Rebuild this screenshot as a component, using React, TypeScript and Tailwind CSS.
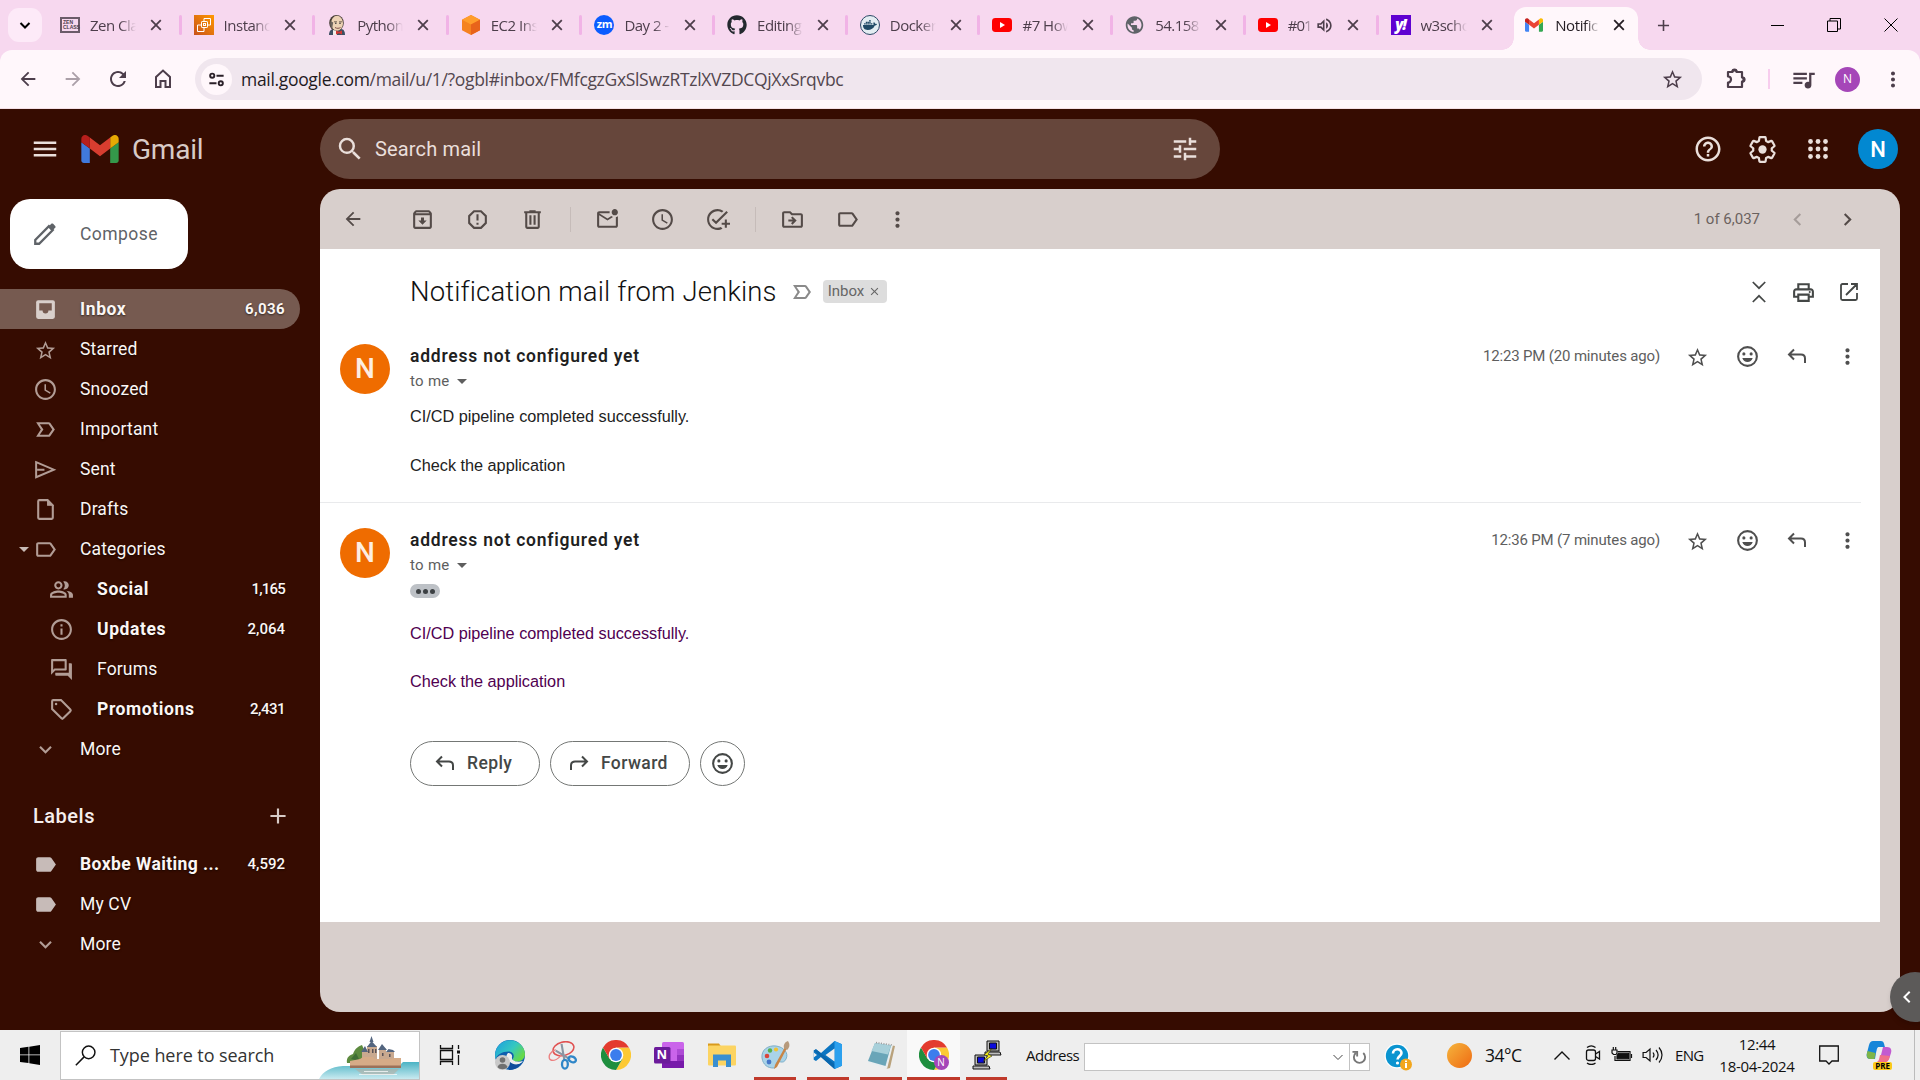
import React from "react";
import {
  MdMenu, MdSearch, MdTune, MdHelpOutline, MdArrowBack, MdArrowForward,
  MdOutlineArchive, MdReportGmailerrorred, MdOutlineMarkEmailUnread, MdSchedule, MdAddTask,
  MdOutlineDriveFileMove, MdOutlineLabel, MdMoreVert, MdChevronLeft, MdChevronRight,
  MdLabelImportantOutline, MdClose, MdOutlinePrint, MdStarBorder,
  MdOutlinePeopleAlt, MdInfoOutline, MdOutlineForum, MdKeyboardArrowDown,
  MdAdd, MdLabel, MdArrowDropDown, MdRefresh, MdQueueMusic, MdOutlineVolumeUp, MdPublic,
} from "react-icons/md";
import { FaGithub, FaDocker } from "react-icons/fa";

/* ---------- brand marks ---------- */

const GmailMark = ({ className }: { className: string }) => (
  <svg viewBox="52 42 88 66" className={className}>
    <path fill="#4285f4" d="M58 108h14V74L52 59v43c0 3.32 2.69 6 6 6" />
    <path fill="#34a853" d="M120 108h14c3.32 0 6-2.69 6-6V59l-20 15" />
    <path fill="#fbbc04" d="M120 48v26l20-15v-8c0-7.42-8.47-11.65-14.4-7.2" />
    <path fill="#ea4335" d="M72 74V48l24 18 24-18v26L96 92" />
    <path fill="#c5221f" d="M52 51v8l20 15V48l-5.6-4.2c-5.94-4.45-14.4-.22-14.4 7.2" />
  </svg>
);

const YouTubeMark = () => (
  <svg viewBox="0 0 20 20" className="size-5">
    <rect y="3" width="20" height="14" rx="3.4" fill="#f00" />
    <path d="M8 7l5 3-5 3z" fill="#fff" />
  </svg>
);

const ZenMark = () => (
  <span className="flex h-4 w-5 flex-col justify-center border-2 border-[#6b5b69] pl-px font-['Liberation_Sans'] text-[5px] leading-[5px] font-bold text-[#4d3e4b]">
    <span>ZEN</span>
    <span>CLASS</span>
  </span>
);

const InstanceMark = () => (
  <svg viewBox="0 0 20 20" className="size-5">
    <defs>
      <linearGradient id="aws" x1="0" y1="1" x2="1" y2="0">
        <stop offset="0" stopColor="#c8511b" />
        <stop offset="1" stopColor="#f90" />
      </linearGradient>
    </defs>
    <rect width="20" height="20" fill="url(#aws)" />
    <g fill="none" stroke="#fff" strokeWidth="1">
      <rect x="7.5" y="6.500" width="6" height="6" rx=".6" />
      <path d="M10 6V3.500h6.500v6.500H14M7 10H3.500v6.500H10V13" />
      <rect x="9.500" y="8.500" width="2" height="2" />
    </g>
  </svg>
);

const JenkinsMark = () => (
  <svg viewBox="0 0 20 20" className="size-5">
    <path d="M2 20c0-4 2-6 5-6h7c3 0 4 3 4 6z" fill="#3c4f63" />
    <ellipse cx="9.500" cy="8" rx="7.300" ry="8" fill="#453c35" />
    <ellipse cx="10" cy="8.300" rx="6" ry="7.500" fill="#ecd2b4" />
    <path d="M3.500 6c-1 3 .4 6.500 1.500 8.500l1.200-7z" fill="#6e645d" />
    <path d="M7 6.800h3M12 6.800h3" stroke="#5a4c40" strokeWidth=".8" />
    <circle cx="8.800" cy="8.300" r=".8" fill="#333" />
    <circle cx="13" cy="8.300" r=".8" fill="#333" />
    <path d="M8 12.500c2 1.200 4 1 5.500 0" stroke="#81504a" fill="none" />
    <path d="M6 15l4 1v4H6z" fill="#f2efe9" />
    <path d="M9 15.500l3 1.300 3-1.300v4l-3-1.300L9 19.500z" fill="#d33833" />
  </svg>
);

const CubeMark = () => (
  <svg viewBox="0 0 20 20" className="size-5">
    <path d="M10 0l9 4.800v10.400L10 20l-9-4.800V4.800z" fill="#f58220" />
    <path d="M10 0l9 4.800-9 4.700-9-4.700z" fill="#ff9d2b" />
    <path d="M10 9.500l9-4.700v10.400L10 20z" fill="#e8641b" />
  </svg>
);

const ZoomMark = () => (
  <span className="flex size-5 items-center justify-center rounded-full bg-[#0b5cff] pb-0.5 font-['Open_Sans'] text-[11px] font-bold tracking-[-0.5px] text-white">zm</span>
);

const DockerMark = () => (
  <span className="flex size-5 items-center justify-center rounded-full border-[1.500px] border-[#2c4a66] bg-[#e3edf2] text-[#1f4a66]">
    <FaDocker className="size-3.5" />
  </span>
);

const YahooMark = () => (
  <span className="flex size-5 items-center justify-center bg-[#5f01d1] pb-0.5 font-['Open_Sans'] text-[15px] font-extrabold tracking-[-1px] text-white italic">y!</span>
);

const ChromeMark = ({ badge }: { badge?: boolean }) => (
  <svg viewBox="0 0 30 30" className="size-[30px]">
    <path d="M15 7.500h13A15 15 0 0 1 15 30l6.500-11.300z" fill="#fcc934" />
    <path d="M2 7.500A15 15 0 0 0 15 30l6.500-11.300L15 15 8.500 18.800z" fill="#1e8e3e" />
    <path d="M2 7.500A15 15 0 0 1 28 7.500H15l-6.500 11.300z" fill="#e33b2e" />
    <circle cx="15" cy="15" r="7.300" fill="#fff" />
    <circle cx="15" cy="15" r="5.900" fill="#3b7ded" />
    {badge && <circle cx="22.500" cy="22.500" r="7.500" fill="#a546b8" />}
  </svg>
);

/* ---------- glyphs missing from the icon set ---------- */

const Cross = () => (
  <svg viewBox="0 0 12 12" className="size-3 shrink-0" fill="none" stroke="currentColor" strokeWidth="1.800">
    <path d="M1.200 1.200l9.600 9.600M10.800 1.200l-9.600 9.600" />
  </svg>
);

const Gear = () => (
  <svg viewBox="0 0 24 24" className="size-[31px]">
    <path
      fill="none"
      stroke="currentColor"
      strokeWidth="1.700"
      strokeLinejoin="round"
      d="M19.140 12.940c.04-.3.06-.61.06-.94 0-.32-.02-.64-.07-.94l2.030-1.580c.18-.14.23-.41.12-.61l-1.920-3.320c-.12-.22-.37-.29-.59-.22l-2.390.96c-.5-.38-1.030-.7-1.620-.94L14.400 2.810c-.04-.24-.24-.41-.48-.41h-3.840c-.24 0-.43.17-.47.41L9.250 5.350C8.660 5.590 8.120 5.920 7.630 6.290L5.240 5.330c-.22-.08-.47 0-.59.22L2.740 8.870C2.620 9.080 2.660 9.340 2.860 9.480l2.030 1.580C4.840 11.360 4.800 11.690 4.800 12s.02.64.07.94l-2.030 1.580c-.18.14-.23.41-.12.61l1.920 3.320c.12.22.37.29.59.22l2.390-.96c.5.38 1.030.7 1.620.94l.36 2.540c.05.24.24.41.48.41h3.840c.24 0 .44-.17.47-.41l.36-2.540c.59-.24 1.130-.56 1.620-.94l2.390.96c.22.08.47 0 .59-.22l1.920-3.320c.12-.22.07-.47-.12-.61z"
    />
    <circle cx="12" cy="12" r="3.200" fill="currentColor" />
  </svg>
);

const AppDots = () => (
  <svg viewBox="0 0 20 20" className="size-5" fill="currentColor">
    {[2.5, 10, 17.5].map((y) => [2.5, 10, 17.5].map((x) => <circle key={`${x}-${y}`} cx={x} cy={y} r="2.400" />))}
  </svg>
);

const InboxIcon = () => (
  <svg viewBox="0 0 24 24" className="size-[25px]">
    <path fill="currentColor" d="M19 3H5a2 2 0 0 0-2 2v14a2 2 0 0 0 2 2h14a2 2 0 0 0 2-2V5a2 2 0 0 0-2-2z" />
    <path d="M6 6h12v7h-3.200a2.800 2.800 0 0 1-5.600 0H6z" fill="#765a50" />
  </svg>
);

const SentIcon = () => (
  <svg viewBox="0 0 24 24" className="size-[25px]" fill="none" stroke="currentColor" strokeWidth="1.900">
    <path d="M3 5l17 7.200L3 19.400zM4 12.200h7" />
  </svg>
);

const Pencil = () => (
  <svg viewBox="0 0 24 24" className="size-[26px]" fill="none" stroke="#5f6368" strokeWidth="2.100">
    <path d="M3 21v-3.600L15.600 4.800l3.600 3.600L6.600 21z" />
    <path d="M14.800 5.600l3.600 3.600 3-3c.5-.5.500-1.200 0-1.700l-1.900-1.900c-.5-.5-1.200-.5-1.700 0z" fill="#5f6368" stroke="none" />
  </svg>
);

const Trash = () => (
  <svg viewBox="0 0 24 24" className="size-[25px]" fill="currentColor">
    <path d="M15 4V3H9v1H4v2h1v13c0 1.100.9 2 2 2h10c1.100 0 2-.9 2-2V6h1V4h-5zm2 15H7V6h10v13zM9 8h2v9H9zm4 0h2v9h-2z" />
  </svg>
);

const ReplyArrow = ({ flip }: { flip?: boolean }) => (
  <svg viewBox="0 0 24 24" className={flip ? "size-6 -scale-x-100" : "size-6"} fill="none" stroke="currentColor" strokeWidth="2">
    <path d="M9 5.500L4 10.500l5 5M4.500 10.500H16c2.500 0 4 1.500 4 4V19" />
  </svg>
);

const Smiley = () => (
  <svg viewBox="0 0 24 24" className="size-[25px]" fill="currentColor">
    <circle cx="12" cy="12" r="9" fill="none" stroke="currentColor" strokeWidth="2" />
    <circle cx="8.500" cy="9.500" r="1.500" />
    <circle cx="15.500" cy="9.500" r="1.500" />
    <path d="M7 13.500h10c-.8 2.300-2.700 3.800-5 3.800s-4.200-1.500-5-3.800z" />
  </svg>
);

const CollapseAll = () => (
  <svg viewBox="0 0 24 24" className="size-6" fill="none" stroke="currentColor" strokeWidth="1.700">
    <path d="M5.800 2l6.200 6.200L18.200 2M5.800 22l6.200-6.200 6.200 6.200" />
  </svg>
);

const PopOut = () => (
  <svg viewBox="0 0 24 24" className="size-6" fill="none" stroke="currentColor" strokeWidth="1.800">
    <path d="M11 4H5.500A1.500 1.500 0 0 0 4 5.500v13A1.500 1.500 0 0 0 5.500 20h13a1.500 1.500 0 0 0 1.500-1.500V13M14 4h6v6M20 4L9 15" />
  </svg>
);

const DraftIcon = () => (
  <svg viewBox="0 0 24 24" className="size-[25px]" fill="none" stroke="currentColor" strokeWidth="2">
    <path d="M14 3H6a1 1 0 0 0-1 1v16a1 1 0 0 0 1 1h12a1 1 0 0 0 1-1V8z" />
    <path d="M14 3v5h5z" fill="currentColor" strokeWidth="1" />
  </svg>
);

const TagIcon = () => (
  <svg viewBox="0 0 24 24" className="size-[25px]" fill="none" stroke="currentColor" strokeWidth="2">
    <path d="M3 4a1 1 0 0 1 1-1h7.500l9 9c.6.600.6 1 0 1.600l-6.900 6.900c-.6.600-1 .6-1.600 0l-9-9z" />
    <circle cx="6.800" cy="6.800" r="1.200" fill="currentColor" stroke="none" />
  </svg>
);

const HomeIcon = () => (
  <svg viewBox="0 0 20 20" className="size-5" fill="none" stroke="currentColor" strokeWidth="2">
    <path d="M3 8l7-6.500L17 8v10h-4.500v-6h-5v6H3z" />
  </svg>
);

const PuzzleIcon = () => (
  <svg viewBox="0 0 24 24" className="size-6" fill="none" stroke="currentColor" strokeWidth="2.200" strokeLinejoin="round">
    <path d="M4 5h4.500a2 2 0 0 1 4 0H18v5.500a2 2 0 0 1 0 4V20H4v-4.500a3 3 0 0 0 0-6z" />
    <path d="M8.500 4.500a2 2 0 0 1 4 0M18.500 10.500a2 2 0 0 1 0 4" fill="currentColor" />
  </svg>
);

const SiteControls = () => (
  <svg viewBox="0 0 20 20" className="size-[19px]" fill="none" stroke="#2b2129" strokeWidth="2">
    <circle cx="5.500" cy="6" r="2.200" />
    <path d="M10 6h7.500M2.500 14H10" />
    <circle cx="14.500" cy="14" r="2.200" />
  </svg>
);

/* ---------- browser chrome ---------- */

const tabs: { icon: React.ReactNode; title: string; sound?: boolean }[] = [
  { icon: <ZenMark />, title: "Zen Cla" },
  { icon: <InstanceMark />, title: "Instanc" },
  { icon: <JenkinsMark />, title: "Python" },
  { icon: <CubeMark />, title: "EC2 Ins" },
  { icon: <ZoomMark />, title: "Day 2 -" },
  { icon: <FaGithub className="size-5 text-[#24292f]" />, title: "Editing" },
  { icon: <DockerMark />, title: "Docker" },
  { icon: <YouTubeMark />, title: "#7 How" },
  { icon: <MdPublic className="-ml-px size-[22px] text-[#5f6368]" />, title: "54.158" },
  { icon: <YouTubeMark />, title: "#01", sound: true },
  { icon: <YahooMark />, title: "w3scho" },
];

const TabStrip = () => (
  <div className="flex h-[50px] items-center bg-[#f7d8ef] text-[#4d3e4b]">
    <div className="ml-2 flex size-[34px] items-center justify-center rounded-[11px] bg-[#fdeaf8] text-black">
      <svg viewBox="0 0 12 12" className="size-3" fill="none" stroke="currentColor" strokeWidth="2"><path d="M1.500 4L6 8.500 10.500 4" /></svg>
    </div>
    <div className="w-1.5" />
    {tabs.map((t, i) => (
      <div key={i} className={"flex h-5 shrink-0 items-center pl-3 " + (i < 4 ? "w-[133.600px]" : "w-[132.700px]")}>
        <span className="flex w-5 shrink-0 items-center">{t.icon}</span>
        <span className={(t.sound ? "w-[30px] tracking-[-1.100px] [mask-image:linear-gradient(to_right,black_16px,transparent_24px)]" : "w-[58px] tracking-[-0.5px] [mask-image:linear-gradient(to_right,black_30px,transparent_46px)]") + " ml-2.5 shrink-0 text-[15px] leading-5 whitespace-nowrap"}>{t.title}</span>
        {t.sound && <span className="flex w-[14px] shrink-0 justify-center"><MdOutlineVolumeUp className="size-[19px] shrink-0" /></span>}
        <span className={"flex shrink-0 justify-center " + (t.sound ? "w-[43px]" : "w-[16px]")}><Cross /></span>
        <span className={i === 10 ? "ml-auto w-[3px]" : "ml-auto h-5 w-[3px] rounded bg-[#f1b3e6]"} />
      </div>
    ))}
    <div className="ml-[3px] flex h-[43px] w-[124px] shrink-0 self-end rounded-t-xl bg-[#fff7fb] text-[#241d23]">
      <div className="relative flex w-full items-center pb-2 pl-[11px]">
        <span className="absolute bottom-0 -left-3 size-3 bg-[radial-gradient(circle_at_0_0,transparent_11.500px,#fff7fb_12px)]" />
        <span className="absolute -right-3 bottom-0 size-3 bg-[radial-gradient(circle_at_100%_0,transparent_11.500px,#fff7fb_12px)]" />
        <GmailMark className="h-[14px] w-[18px]" />
        <span className="ml-3 w-[54px] shrink-0 text-[15px] leading-5 tracking-[-0.4px] whitespace-nowrap [mask-image:linear-gradient(to_right,black_30px,transparent_45px)]">Notific</span>
        <span className="flex w-[20px] justify-center"><Cross /></span>
      </div>
    </div>
    <div className="flex w-[50px] justify-center"><MdAdd className="size-[19px]" /></div>
    <div className="ml-auto flex items-center text-black">
      <span className="flex w-[57px] justify-center"><span className="h-px w-[13px] bg-black" /></span>
      <span className="flex w-[56px] justify-center">
        <svg viewBox="0 0 14 14" className="size-3.5" fill="none" stroke="currentColor"><path d="M.5 3h10v10.500H.5zM3 3V.5h10.500V11H10.500" /></svg>
      </span>
      <span className="mr-px flex w-[57px] justify-center">
        <svg viewBox="0 0 14 14" className="size-3.5" fill="none" stroke="currentColor"><path d="M.5.5l13 13M13.500.5l-13 13" /></svg>
      </span>
    </div>
  </div>
);

const Toolbar = () => (
  <div className="bg-[#f7d8ef]">
    <div className="flex h-[59px] items-center rounded-t-xl border-b border-[#f3dfe6] bg-[#fff7fb] pl-[5px] text-[#4d3e4b]">
      <span className="flex w-[45px] justify-center"><MdArrowBack className="size-[22px]" /></span>
      <span className="flex w-[45px] justify-center text-[#ab9fa8]"><MdArrowForward className="size-[22px]" /></span>
      <span className="flex w-[45px] justify-center"><MdRefresh className="size-6" /></span>
      <span className="flex w-[45px] justify-center pb-px"><HomeIcon /></span>
      <div className="ml-[10px] flex h-[42px] w-[1507px] items-center rounded-full bg-[#f0e6ee] pl-[6px]">
        <span className="flex size-[31px] items-center justify-center rounded-full bg-[#fff7fb]"><SiteControls /></span>
        <span className="ml-[9px] text-[17.500px] tracking-[-0.32px] text-[#53474f]"><span className="text-[#1f1a1e]">mail.google.com</span>/mail/u/1/?ogbl#inbox/FMfcgzGxSlSwzRTzlXVZDCQjXxSrqvbc</span>
        <MdStarBorder className="mr-[18px] ml-auto size-[23px]" />
      </div>
      <span className="ml-[22px] flex w-6"><PuzzleIcon /></span>
      <span className="ml-[20px] h-5 w-0.5 bg-[#f8cdee]" />
      <span className="ml-[19px] flex w-7 justify-center"><MdQueueMusic className="size-[27px]" /></span>
      <span className="ml-[18px] flex size-[25px] items-center justify-center rounded-full bg-[#a546b8] text-xs text-white">N</span>
      <span className="ml-[21px] flex w-6 justify-center"><MdMoreVert className="size-[25px]" /></span>
    </div>
  </div>
);

/* ---------- Gmail ---------- */

const GmailHeader = () => (
  <header className="flex h-20 items-center text-[#eadfdb]">
    <MdMenu className="ml-[30px] size-[30px]" />
    <GmailMark className="ml-[21px] h-[28px] w-[38px] opacity-90" />
    <span className="mt-0.5 ml-[13px] w-[188px] text-[28px] tracking-[-0.2px] text-[#d8cbc7]">Gmail</span>
    <div className="flex h-[60px] w-[900px] items-center rounded-full bg-[#66463b]">
      <MdSearch className="ml-[15px] size-[30px]" />
      <span className="ml-[10px] text-[20px] tracking-[0.15px]">Search mail</span>
      <MdTune className="mr-5 ml-auto size-[30px]" />
    </div>
    <div className="ml-auto flex items-center">
      <span className="flex w-[55px] justify-center"><MdHelpOutline className="size-[30px]" /></span>
      <span className="flex w-[55px] justify-center"><Gear /></span>
      <span className="flex w-[55px] justify-center"><AppDots /></span>
      <span className="mr-[22px] ml-[13px] flex size-10 items-center justify-center rounded-full bg-[#0288d1] text-[22px] font-medium text-white">N</span>
    </div>
  </header>
);

type NavItem = { icon: React.ReactNode; label: string; count?: string; bold?: boolean; sub?: boolean; active?: boolean; caret?: boolean };
const ic = "size-[25px]";
const nav: NavItem[] = [
  { icon: <InboxIcon />, label: "Inbox", count: "6,036", bold: true, active: true },
  { icon: <MdStarBorder className="mt-0.5 size-[23px]" />, label: "Starred" },
  { icon: <MdSchedule className={ic} />, label: "Snoozed" },
  { icon: <MdLabelImportantOutline className={ic} />, label: "Important" },
  { icon: <SentIcon />, label: "Sent" },
  { icon: <DraftIcon />, label: "Drafts" },
  { icon: <MdOutlineLabel className={ic} />, label: "Categories", caret: true },
  { icon: <MdOutlinePeopleAlt className={ic} />, label: "Social", count: "1,165", bold: true, sub: true },
  { icon: <MdInfoOutline className={ic} />, label: "Updates", count: "2,064", bold: true, sub: true },
  { icon: <MdOutlineForum className={ic} />, label: "Forums", sub: true },
  { icon: <TagIcon />, label: "Promotions", count: "2,431", bold: true, sub: true },
  { icon: <MdKeyboardArrowDown className={ic} />, label: "More" },
];
const labels: NavItem[] = [
  { icon: <MdLabel className={ic} />, label: "Boxbe Waiting ...", count: "4,592", bold: true },
  { icon: <MdLabel className={ic} />, label: "My CV" },
  { icon: <MdKeyboardArrowDown className={ic} />, label: "More" },
];

const NavRow = ({ icon, label, count, bold, sub, active, caret }: NavItem) => (
  <div className={"flex h-10 w-[300px] items-center rounded-r-full pr-[15px] text-[17.500px] text-[#fbf6f4] [text-shadow:0_1px_2px_rgba(0,0,0,0.6)] " + (active ? "bg-[#765a50]" : "")}>
    <span className={"flex items-center justify-end " + (sub ? "w-[74px]" : "w-[58px]")}>
      {caret && <MdArrowDropDown className="-mr-[3px] size-[24px] text-[#c9bbb6]" />}
      <span className={"flex w-[25px] justify-center " + (active ? "text-[#d9cfcb]" : label === "My CV" || (bold && !sub) ? "text-[#c7bbb8]" : "text-[#b29d96]")}>{icon}</span>
    </span>
    <span className={(sub ? "ml-[23px] " : "ml-[22px] ") + (bold ? (sub || active ? "font-bold tracking-[0.600px]" : "font-bold tracking-[0.42px]") : "tracking-[0.15px]")}>{label}</span>
    <span className={"ml-auto text-[15px] " + (active ? "font-bold tracking-[0.4px]" : count === "1,165" ? "font-medium tracking-[-0.800px]" : count === "2,431" ? "font-medium tracking-[-0.5px]" : "font-medium")}>{count}</span>
  </div>
);

const Sidebar = () => (
  <aside className="w-80 shrink-0 pt-[10px]">
    <div className="ml-2.5 flex h-[70px] w-[178px] items-center rounded-[20px] bg-white pl-[22px] text-[#5f6368]">
      <Pencil />
      <span className="ml-[22px] text-[17.500px] tracking-[0.45px]">Compose</span>
    </div>
    <nav className="mt-5">{nav.map((n) => <NavRow key={n.label} {...n} />)}</nav>
    <div className="mt-[27px] flex h-10 w-[300px] items-center pr-[9px] pl-[33px] text-[20px] font-medium tracking-[0.5px] text-[#f5efed]">
      Labels
      <MdAdd className="ml-auto size-[26px] text-[#d8cbc7]" />
    </div>
    <nav className="mt-2">{labels.map((n) => <NavRow key={n.label} {...n} />)}</nav>
  </aside>
);

const Cell = ({ children, w = "w-[55px]" }: { children: React.ReactNode; w?: string }) => (
  <span className={"flex shrink-0 justify-center " + w}>{children}</span>
);

const MailToolbar = () => (
  <div className="flex h-[60px] items-center text-[#544b48]">
    <Cell w="w-[66px]"><MdArrowBack className="size-[22px]" /></Cell>
    <span className="w-[9px]" />
    <Cell><MdOutlineArchive className={ic} /></Cell>
    <Cell><MdReportGmailerrorred className={ic} /></Cell>
    <Cell><Trash /></Cell>
    <Cell w="w-5"><span className="h-[25px] w-px bg-[#c6bcb9]" /></Cell>
    <Cell><MdOutlineMarkEmailUnread className={ic} /></Cell>
    <Cell><MdSchedule className={ic} /></Cell>
    <Cell><MdAddTask className={ic} /></Cell>
    <Cell w="w-5"><span className="h-[25px] w-px bg-[#c6bcb9]" /></Cell>
    <Cell><MdOutlineDriveFileMove className={ic} /></Cell>
    <Cell><MdOutlineLabel className={ic} /></Cell>
    <Cell w="w-[45px]"><MdMoreVert className={ic} /></Cell>
    <span className="ml-auto text-[15px] text-[#6b625f]">1 of 6,037</span>
    <span className="ml-[12px] flex w-[50px] justify-center text-[#a69d9a]"><MdChevronLeft className={ic} /></span>
    <span className="mr-[28px] flex w-[50px] justify-center"><MdChevronRight className={ic} /></span>
  </div>
);

const MessageHead = ({ time }: { time: string }) => (
  <div className="flex">
    <span className="mt-px ml-5 flex size-[50px] shrink-0 items-center justify-center rounded-full bg-[#ef6c00] text-[28px] font-medium text-[#fdeee2]">N</span>
    <div className="ml-5 flex flex-1 flex-col">
      <div className="flex h-[26px] items-center">
        <span className="text-[17.500px] font-semibold tracking-[0.77px] text-[#1f1f1f]">address not configured yet</span>
        <span className="ml-auto text-[15px] tracking-[-0.16px] text-[#5e5e5e]">{time}</span>
        <div className="mr-2 ml-3 flex items-center text-[#4f4f4f]">
          <Cell w="w-[50px]"><MdStarBorder className="mt-0.5 size-[23px]" /></Cell>
          <Cell w="w-[50px]"><Smiley /></Cell>
          <Cell w="w-[50px]"><ReplyArrow /></Cell>
          <Cell w="w-[50px]"><MdMoreVert className={ic} /></Cell>
        </div>
      </div>
      <div className="flex h-6 items-center text-[15px] tracking-[0.28px] text-[#5e5e5e]">to me<MdArrowDropDown className="size-6" /></div>
    </div>
  </div>
);

const Mail = () => (
  <div className="h-[673px] w-[1560px] bg-white pt-5">
    <div className="flex h-[46px] items-center pl-[90px]">
      <h1 className="text-[27.500px] font-light tracking-[0.14px] text-[#111]">Notification mail from Jenkins</h1>
      <MdLabelImportantOutline className="ml-[13px] size-6 text-[#8a8a8a]" />
      <span className="mb-0.5 ml-[9px] flex h-[23px] w-16 items-center rounded bg-[#dddddd] pl-[5px] text-[15px] text-[#666]">Inbox<MdClose className="ml-[4px] size-[13px]" /></span>
      <div className="mr-[9px] ml-auto flex text-[#444746]">
        <Cell w="w-[45px]"><CollapseAll /></Cell>
        <Cell w="w-[45px]"><MdOutlinePrint className={ic} /></Cell>
        <Cell w="w-[45px]"><PopOut /></Cell>
      </div>
    </div>
    <section className="h-[188px] w-[1541px] border-b border-[#e9eaec] pt-7">
      <div className="w-[1560px]"><MessageHead time="12:23 PM (20 minutes ago)" /></div>
      <div className="ml-[90px] pt-[10px] font-['Liberation_Sans'] text-[16.250px] leading-[24.300px] tracking-[-0.01px] text-[#222]">
        <p>CI/CD pipeline completed successfully.</p>
        <p className="mt-[25px]">Check the application</p>
      </div>
    </section>
    <section className="pt-6">
      <MessageHead time="12:36 PM (7 minutes ago)" />
      <div className="mt-1.5 ml-[90px] flex h-3.5 w-[30px] items-center justify-center gap-[2px] rounded-full bg-[#bdc1c6]">
        <i className="size-[5px] rounded-full bg-[#3c4043]" />
        <i className="size-[5px] rounded-full bg-[#3c4043]" />
        <i className="size-[5px] rounded-full bg-[#3c4043]" />
      </div>
      <div className="ml-[90px] pt-[23px] font-['Liberation_Sans'] text-[16.250px] leading-[24.300px] tracking-[-0.01px] text-[#500050]">
        <p>CI/CD pipeline completed successfully.</p>
        <p className="mt-6">Check the application</p>
      </div>
      <div className="mt-[47px] ml-[90px] flex gap-2.5 text-[17.500px] font-medium tracking-[0.4px] text-[#444746]">
        <button className="flex h-[45px] w-[130px] items-center rounded-full border border-[#747775] pl-[22px]"><ReplyArrow /><span className="ml-[10px]">Reply</span></button>
        <button className="flex h-[45px] w-[140px] items-center rounded-full border border-[#747775] pl-4"><ReplyArrow flip /><span className="ml-[10px]">Forward</span></button>
        <button className="flex size-[45px] items-center justify-center rounded-full border border-[#747775]"><Smiley /></button>
      </div>
    </section>
  </div>
);

/* ---------- Windows taskbar ---------- */

const CastleScene = () => (
  <svg viewBox="0 0 100 48" className="ml-auto h-[48px] w-[100px]">
    <defs>
      <linearGradient id="sea" x1="0" y1="0" x2="0" y2="1"><stop offset="0" stopColor="#4bb3c4" /><stop offset="1" stopColor="#c9eaf0" /></linearGradient>
    </defs>
    <path d="M0 48c4-8 12-12 24-13h56l4-4h16v17z" fill="url(#sea)" />
    <path d="M28 32c-1-6 3-8 6-9 2-6 6-8 9-9l8 18z" fill="#5c8a3e" />
    <path d="M32 28l5-6 4 8z" fill="#3f6e35" />
    <path d="M43 20l3-3 3 3v12h-6zM48 15h10v17H48zM60 18l3-3 4 3v14h-7zM67 21h8v11h-8z" fill="#c9a98f" />
    <path d="M52.500 5l2 6h-4zM48 16l4.500-6 5.500 6zM59 19l4-6 5 6zM42 21l4-6 3 6zM67 21l2.500-3 4.500 1 2 2z" fill="#53657f" />
    <path d="M49 18h1.500v4H49zM53 18h1.500v4H53zM56 18h1.500v4H56zM63 22h1.500v3H63zM70 23h1.500v3H70z" fill="#5a5357" />
    <path d="M31 30l10-2 3-2h10l2 2h16l3-1h7v8H70l-2 1H46l-3-1H31z" fill="#d6ab87" />
    <path d="M31 34.500h51V37H31z" fill="#9c7159" />
    <path d="M36 38h44l-6 6H44z" fill="#b7a99d" opacity=".55" />
    <path d="M45 40.500h24M40 43.500h38" stroke="#fff" opacity=".7" />
  </svg>
);

const EdgeMark = () => (
  <svg viewBox="0 0 30 30" className="size-[30px]">
    <defs>
      <linearGradient id="edgeA" x1="0" y1="0" x2="1" y2=".6"><stop offset="0" stopColor="#1b9de2" /><stop offset=".6" stopColor="#35c8c0" /><stop offset="1" stopColor="#66d948" /></linearGradient>
    </defs>
    <circle cx="15" cy="15" r="15" fill="#0f5fae" />
    <path d="M.2 13A15 15 0 0 1 30 14c0 5-4 7.500-8 7.500-3 0-5-1-4-3 2-3 0-7-4.500-7C7 11.500 2 15 .2 19z" fill="url(#edgeA)" />
    <path d="M13 13c-3 3-2 9 2 11 5 2 10 1 13-3-6 2-12 0-11-4 .5-2-1-4-4-4z" fill="#eeeeee" />
    <path d="M27 23c-3 4-8 7-13 7 0-3-1-7 1-8 3 3 8 3 12 1z" fill="#0f4c9c" />
    <circle cx="7.500" cy="22.500" r="7.500" fill="#c9c9c9" />
    <circle cx="7.500" cy="20" r="2.800" fill="#707070" />
    <path d="M2.500 27c1-4.500 9-4.500 10 0-2 3-8 3-10 0z" fill="#707070" />
  </svg>
);

const SnipMark = () => (
  <svg viewBox="0 0 30 30" className="size-[29px]" fill="none">
    <ellipse cx="16" cy="8" rx="11" ry="7" stroke="#e05252" strokeWidth="1.600" transform="rotate(-15 16 8)" />
    <path d="M8 9c-6 2-8 7-6 10 4 3 9-1 12-5" stroke="#ec8080" strokeWidth="1.400" />
    <path d="M14 3l3 17M8 10l15 9" stroke="#8a96a3" strokeWidth="2.200" />
    <ellipse cx="17.500" cy="24" rx="3" ry="4.500" stroke="#2f86c8" strokeWidth="2.400" />
    <ellipse cx="25" cy="19" rx="4" ry="2.800" stroke="#2f86c8" strokeWidth="2.400" transform="rotate(25 25 19)" />
  </svg>
);

const OneNoteMark = () => (
  <span className="relative flex size-[30px] items-center">
    <svg viewBox="0 0 30 30" className="absolute inset-0 size-[30px]">
      <rect x="8" y="2" width="22" height="26" rx="1.500" fill="#ca64ea" />
      <path d="M23 9h7v6h-7z" fill="#ae4bd5" />
      <path d="M23 15h7v6h-7z" fill="#9332bf" />
      <path d="M8 21h22v7H8z" fill="#7719aa" />
      <rect y="7" width="16.500" height="16.500" rx="1.500" fill="#6b1a9a" />
    </svg>
    <span className="relative w-[16.500px] text-center text-[13px] font-bold text-white">N</span>
  </span>
);

const FolderMark = () => (
  <svg viewBox="0 0 30 30" className="size-[30px]">
    <path d="M1 3.500h11l2 3H1z" fill="#d99a1c" />
    <rect x="1" y="5.500" width="28" height="20" rx="1" fill="#fcd462" />
    <path d="M6 14.500h18V27h-5v-6.500h-8V27H6z" fill="#3a8fd0" />
  </svg>
);

const PaintMark = () => (
  <svg viewBox="0 0 30 30" className="size-[30px]">
    <path d="M2 18C1 10 8 5 16 6s13 7 10 13-7 1-9 3 1 6-4 6S3 25 2 18z" fill="#a9d3e8" stroke="#7fb0c9" />
    <circle cx="7" cy="16" r="2.300" fill="#d9463d" /><circle cx="10" cy="10.500" r="2.200" fill="#58b04f" />
    <circle cx="16" cy="9.500" r="2.100" fill="#f1c232" /><circle cx="9" cy="22" r="2.400" fill="#4676c8" />
    <path d="M25 7l2 1-10 19-3 2 1-4z" fill="#c98545" />
    <path d="M24 8c-1-3 1-6 4-7 2 3 2 6-1 9z" fill="#b79a7c" />
  </svg>
);

const CodeMark = () => (
  <svg viewBox="0 0 30 30" className="size-[30px]">
    <path d="M21.500 1L29 4.300v21.400L21.500 29 8 17l-5 4-2.300-1.300V10.500L3 9.200 8 13z" fill="#0b75c2" />
    <path d="M.7 10.500L3 9.200l20 16-1.500 3.800z" fill="#0a67ad" />
    <path d="M21.500 1L29 4.300v21.400L21.500 29z" fill="#2ba0ee" />
    <path d="M21.500 8.500v13L12.500 15zM.7 12.500L4 15l-3.300 2.500z" fill="#eee" />
  </svg>
);

const NotepadMark = () => (
  <svg viewBox="0 0 30 30" className="size-[30px]">
    <path d="M24 5l5 1-5 22-4 1z" fill="#b9a27c" />
    <path d="M10 2l17 3-6 24L2 23z" fill="#e9eef0" />
    <path d="M9 3l16 2.500L19.500 26 2 21z" fill="#69a5b8" />
    <path d="M9 3l16 2.500-3 9L5.500 11z" fill="#a8d0da" />
    <path d="M10 2.500l16 2.500" stroke="#999" strokeDasharray="1 1.500" strokeWidth="1.500" />
  </svg>
);

const PuttyMark = () => (
  <svg viewBox="0 0 30 30" className="size-[30px]" stroke="#111">
    <path d="M15 1h12v10H15zM13 12h15l1 3H13z" fill="#bdbdbd" /><path d="M17.500 3h7v6h-7z" fill="#0b0bdc" />
    <path d="M3 15h12v10H3zM1 26h16l1 3H1z" fill="#bdbdbd" /><path d="M5.500 17h7v6h-7z" fill="#0b0bdc" />
    <path d="M20 8l-8 7 4 .8-5 5.700 9-5.500-4-1.800z" fill="#f7ef1a" strokeWidth=".5" />
  </svg>
);

const TaskIcon = ({ children, bar, hot }: { children: React.ReactNode; bar?: string; hot?: boolean }) => (
  <span className={"flex h-[50px] w-[53px] shrink-0 flex-col items-center " + (hot ? "bg-[#f9f9f9]" : "")}>
    <span className="flex h-[47px] items-center pt-[3px]">{children}</span>
    {bar && <span className={"h-[3px] bg-[#c03a2b] " + bar} />}
  </span>
);

const Taskbar = () => (
  <footer className="flex h-[50px] items-center bg-[#eeeeee] text-[#111]">
    <span className="flex w-[60px] shrink-0 justify-center">
      <svg viewBox="0 0 20 20" className="size-5"><path d="M0 3l8.500-1.200v7.700H0zM9.300 1.700L20 0v9.500H9.300zM0 10.300h8.500V18L0 17zM9.300 10.300H20V20L9.300 18.200z" /></svg>
    </span>
    <div className="flex h-[49px] w-[360px] shrink-0 items-center border border-[#c3c3c3] bg-white pl-3.5">
      <svg viewBox="0 0 20 20" className="size-[21px] shrink-0" fill="none" stroke="#111" strokeWidth="1.400"><circle cx="13" cy="7" r="6" /><path d="M8.700 11.300L.8 19.200" /></svg>
      <span className="ml-3.5 text-[18px] tracking-[-0.07px] whitespace-nowrap text-[#333]">Type here to search</span>
      <CastleScene />
    </div>
    <span className="ml-[18px] flex w-6 shrink-0 justify-center">
      <svg viewBox="0 0 22 20" className="h-5 w-[22px]" fill="none" stroke="#111" strokeWidth="1.300"><path d="M1.500 0v3.500h12V0M1.500 5.500h12v9h-12zM1.500 20v-3.500h12V20M19.500 0v4M19.500 10v10" /><path d="M19.500 5.500v3" strokeWidth="3" /></svg>
    </span>
    <span className="w-[21px] shrink-0" />
    <TaskIcon><EdgeMark /></TaskIcon>
    <TaskIcon><SnipMark /></TaskIcon>
    <TaskIcon><ChromeMark /></TaskIcon>
    <TaskIcon><OneNoteMark /></TaskIcon>
    <TaskIcon><FolderMark /></TaskIcon>
    <TaskIcon bar="w-[42px]"><PaintMark /></TaskIcon>
    <TaskIcon bar="w-[42px]"><CodeMark /></TaskIcon>
    <TaskIcon bar="w-[42px]"><NotepadMark /></TaskIcon>
    <TaskIcon bar="w-[53px]" hot>
      <span className="relative flex">
        <ChromeMark badge />
        <span className="absolute right-0 bottom-0 w-[15px] text-center text-[10px] leading-[15px] text-white">N</span>
      </span>
    </TaskIcon>
    <TaskIcon bar="w-[41px]"><PuttyMark /></TaskIcon>
    <span className="ml-[13px] w-[58px] shrink-0 text-[15px] tracking-[-0.5px]">Address</span>
    <div className="mt-1 flex h-[28px] w-[286px] shrink-0 items-stretch border border-[#c3c3c3] bg-white">
      <span className="flex w-[264px] items-center justify-end pr-1.5"><svg viewBox="0 0 10 10" className="size-2.5" fill="none" stroke="#444"><path d="M.5 3L5 7.500 9.500 3" /></svg></span>
      <span className="flex flex-1 items-center justify-center border-l border-[#c3c3c3] text-[#777]">
        <svg viewBox="0 0 16 18" className="h-[17px] w-[15px]" fill="none" stroke="currentColor" strokeWidth="2"><path d="M12 4.200a6 6 0 1 1-8 0M.5 3h5v5" /></svg>
      </span>
    </div>
    <svg viewBox="0 0 28 28" className="mt-1 ml-[14px] size-7 shrink-0">
      <circle cx="13" cy="13" r="12.500" fill="#fff" /><circle cx="13" cy="13" r="11.200" fill="#0a94d0" />
      <path d="M9 10.500c0-5.500 8.500-5.500 8.500-.5 0 3-4 3.500-4 6.500" fill="none" stroke="#fff" strokeWidth="2.600" />
      <circle cx="13.500" cy="20" r="1.600" fill="#fff" />
      <circle cx="22" cy="21.500" r="6" fill="#f2a61d" /><path d="M21 20h2v5h-2zM21 17.500h2v1.600h-2z" fill="#fff" />
    </svg>
    <span className="ml-[35px] size-[25px] shrink-0 rounded-full bg-[linear-gradient(135deg,#f5b53d,#ef6a12)]" />
    <span className="ml-[13px] w-[62px] shrink-0 text-[17.500px] tracking-[-0.5px]">34°C</span>
    <span className="ml-[5px] flex w-5 justify-center"><svg viewBox="0 0 16 9" className="h-[9px] w-4" fill="none" stroke="#111" strokeWidth="1.400"><path d="M.5 8.500L8 1l7.500 7.500" /></svg></span>
    <span className="ml-[11px] flex w-5 justify-center"><svg viewBox="0 0 16 20" className="h-5 w-4" fill="none" stroke="#111" strokeWidth="1.300"><rect x="1.500" y="5" width="9" height="10.500" rx="2" /><path d="M10.500 9l4-2.500v7.500l-4-2.500M2 2.500c2.500-2 6-2 8.500 0M2 18c2.500 1.800 6 1.800 8.500 0" /></svg></span>
    <span className="ml-[9px] flex w-5 justify-center"><svg viewBox="0 0 22 16" className="h-4 w-[22px] shrink-0" fill="none" stroke="#111" strokeWidth="1.200"><path d="M6.500 4.500H19v9H4V9" /><path d="M7.500 6.200h10v5.600H6V9z" fill="#111" /><path d="M20.500 7v4M1 3h5v3L5 7.500H2.500L1 6zM2.300 0v3M4.700 0v3" /></svg></span>
    <span className="ml-2.5 flex w-5 justify-center"><svg viewBox="0 0 20 18" className="h-[18px] w-[21px] shrink-0" fill="none" stroke="#111" strokeWidth="1.200"><path d="M.6 6.500h3L7.500 3v12l-3.900-3.500h-3zM10.500 6.500c1.200 1.500 1.200 3.500 0 5M13.500 4c2.500 3 2.500 7 0 10M16.500 1.500c4 4.500 4 10.500 0 15" /></svg></span>
    <span className="ml-[13px] w-[31px] shrink-0 text-[15px] tracking-[-0.7px]">ENG</span>
    <span className="ml-[11px] w-[80px] shrink-0 text-center text-[15px] leading-[22.500px] tracking-[-0.3px] whitespace-nowrap">12:44<br />18-04-2024</span>
    <svg viewBox="0 0 20 20" className="ml-[22px] size-5 shrink-0" fill="none" stroke="#111" strokeWidth="1.300"><path d="M.7 1h18.600v15H13l-3 3-3-3H.7z" /></svg>
    <span className="relative ml-[25px] flex size-[30px] shrink-0 flex-col items-center">
      <svg viewBox="0 0 26 22" className="h-[22px] w-[26px]">
        <path d="M7 1h8c3 0 3 3 4 6h-6c-2 0-2 2-3 6l-1 6H4c-3 0-4-3-3-6l2-8c1-3 2-4 4-4z" fill="#1686d9" />
        <path d="M1.500 11l8 2-1 6H4c-3 0-4-3-2.500-8z" fill="#7db548" />
        <path d="M17 7h4c4 0 5 3 4 6l-2 6c-1 2-2 3-4 3h-8c3 0 3-3 4-7z" fill="#c25bd0" />
        <path d="M14 15l10 1-1 3c-1 2-2 3-4 3h-8c2-1 2-3 3-7z" fill="#f0708a" />
      </svg>
      <span className="absolute right-0.5 bottom-0 rounded-xs bg-[#fbc918] px-0.5 text-[8px] leading-[8px] font-bold text-black">PRE</span>
    </span>
    <span className="ml-auto h-full w-[6px] border-l border-[#bbb]" />
  </footer>
);

export default function App() {
  return (
    <div className="relative flex h-[1080px] w-[1920px] flex-col overflow-hidden bg-[#360c01] font-['Open_Sans',sans-serif]">
      <TabStrip />
      <Toolbar />
      <div className="relative flex h-[921px] flex-col font-['Roboto',sans-serif]">
        <GmailHeader />
        <div className="flex">
          <Sidebar />
          <main className="h-[823px] w-[1580px] overflow-hidden rounded-[20px] bg-[#d8cfcc]">
            <MailToolbar />
            <Mail />
          </main>
        </div>
        <div className="absolute top-[863px] left-[1890px] flex size-[50px] items-center rounded-full bg-[#5c5a59] pl-[5px] text-white shadow-md"><MdChevronLeft className="size-6" /></div>
      </div>
      <Taskbar />
    </div>
  );
}
